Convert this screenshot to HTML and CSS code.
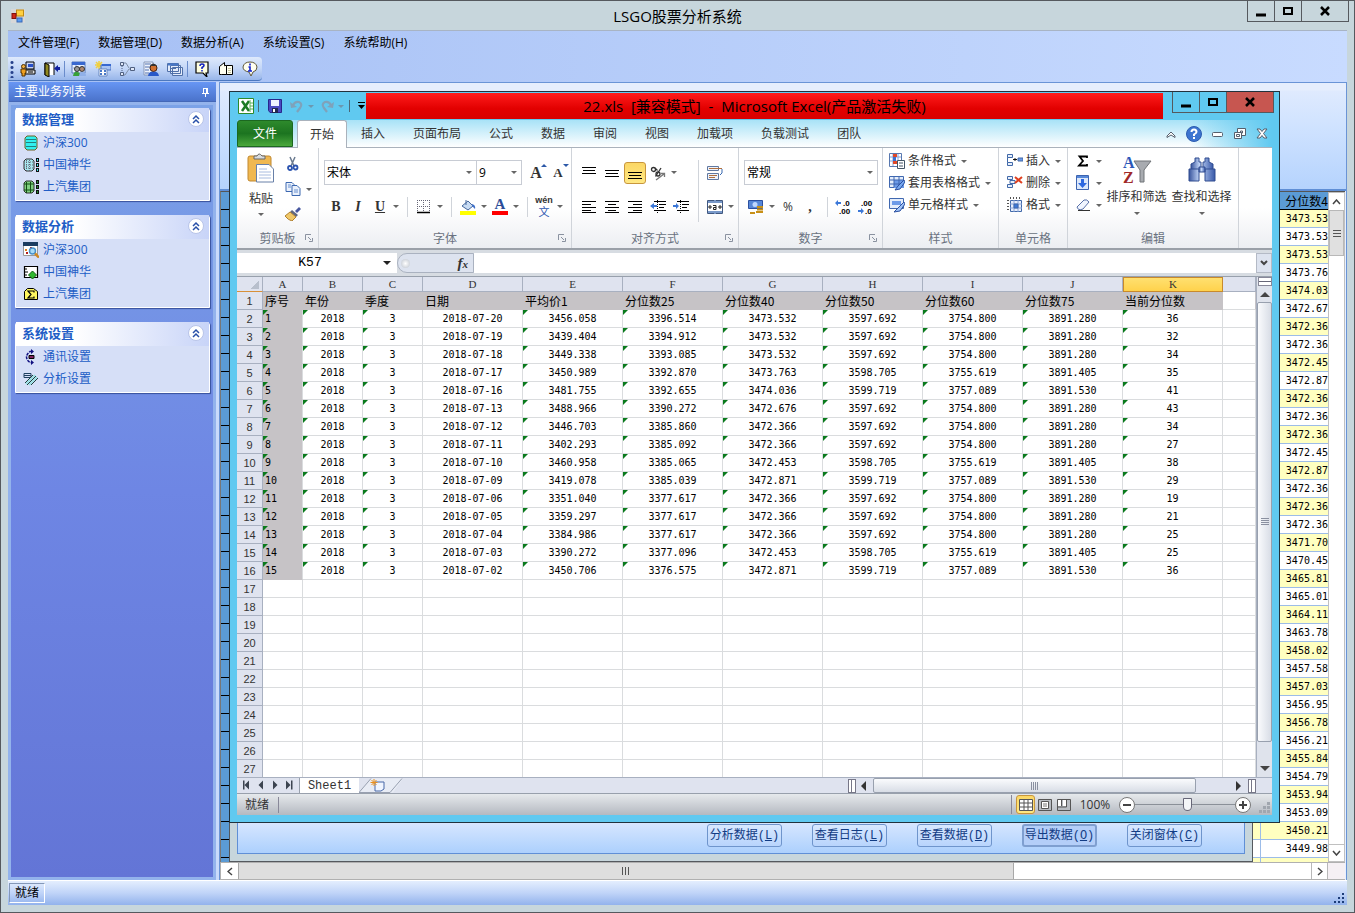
FILE: index.html
```
<!DOCTYPE html>
<html lang="zh-CN">
<head>
  <meta charset="UTF-8" />
  <meta name="viewport" content="width=device-width, initial-scale=1.0" />
  <title>LSGO股票分析系统</title>
  <link rel="stylesheet" href="styles.css">
</head>
<body>
<div class="app">
  <header class="titlebar">
    <svg class="app-icon" width="14" height="14" viewBox="0 0 14 14"><rect width="14" height="14" fill="#d8d8d8"/><rect x="5.500" y="1" width="7" height="6" fill="#ffd040" stroke="#c08a10"/><rect x="1" y="4.500" width="4" height="5" fill="#d02818" stroke="#801010"/><rect x="6" y="9" width="5" height="4" fill="#5c9cf0" stroke="#3468b8"/></svg>
    <h1>LSGO股票分析系统</h1>
    <div class="winbtns">
      <button aria-label="最小化"><svg width="12" height="12"><path d="M1 10h10" stroke="#000" stroke-width="3"/></svg></button>
      <button aria-label="最大化"><svg width="12" height="12"><path d="M2 3h8v6H2z" fill="none" stroke="#000" stroke-width="2"/></svg></button>
      <button class="close" aria-label="关闭"><svg width="12" height="12"><path d="M2 2l8 8M10 2l-8 8" stroke="#000" stroke-width="2.500"/></svg></button>
    </div>
  </header>

  <div class="frame">
    <nav class="menubar">
      <button>文件管理(F)</button><button>数据管理(D)</button><button>数据分析(A)</button><button>系统设置(S)</button><button>系统帮助(H)</button>
    </nav>
    <div class="toolrow">
      <div class="toolbar">
        <i class="grip"></i>
        <button aria-label="登录"><svg width="16" height="16"><path d="M6 1h8v7H6z" fill="#c8d4f0" stroke="#000"/><path d="M8 3h5v3H8z" fill="#2850c8"/><path d="M5 9h10v4H5z" fill="#e0e0e0" stroke="#000"/><path d="M8 11h5" stroke="#000"/><circle cx="3.500" cy="5.500" r="2" fill="#f0b040" stroke="#503000"/><path d="M1 8h5v4H5v3H2v-3H1z" fill="#f0a020" stroke="#503000"/></svg></button>
        <button aria-label="退出"><svg width="16" height="16"><path d="M1 14V2h9v12" fill="#fff" stroke="#000"/><path d="M1 2l4 2v12l-4-2z" fill="#908820" stroke="#000"/><path d="M16 6h-2V4l-4 3.500L14 11V9h2z" fill="#1020a0"/></svg></button>
        <i class="tsep"></i>
        <button aria-label="用户"><svg width="16" height="16"><path d="M1 1h13v11H1z" fill="#e8f0ff" stroke="#5878b8"/><path d="M1 1h13v3H1z" fill="#3868d0"/><path d="M2 7h11M5 4v8" stroke="#90a8d8"/><circle cx="6" cy="8" r="2.500" fill="#999" stroke="#333"/><circle cx="11" cy="8" r="2.500" fill="#b08870" stroke="#333"/><path d="M2 15q1-5 4-4 3 0 4 4z" fill="#38a038"/><path d="M8 15q1-5 4-4 3 0 3 4z" fill="#90b0e8"/></svg></button>
        <button aria-label="新建表"><svg width="16" height="16"><path d="M4 0v8M0 4h8M1 1l6 6M7 1L1 7" stroke="#f0d040" stroke-width="1.500"/><path d="M6 4h10v5H6z" fill="#a8c4f4" stroke="#4870c0"/><path d="M7 3h9v2H7z" fill="#3868d0"/><path d="M4 8h8v7H4z" fill="#fff" stroke="#6888c0"/><path d="M5 10h2M9 10h2M5 13h2M9 13h2" stroke="#4878c8" stroke-width="2"/></svg></button>
        <button aria-label="流程"><svg width="16" height="16" fill="#dfe8f8" stroke="#506080"><path d="M4 2h3l3 5M4 14h2l4-6h1" fill="none" stroke="#8090a8"/><path d="M1.500 1.500h3v3h-3zM1.500 11.500h3v3h-3zM11.500 6.500h4v3h-4z"/><path d="M3 5v6" stroke-dasharray="1 1"/></svg></button>
        <button aria-label="人员"><svg width="16" height="16"><path d="M1 1h9v13H1z" fill="#eef3fc" stroke="#8898b8"/><path d="M2 3h6M2 6h5M2 9h4M2 12h4" stroke="#5070b0"/><circle cx="10.500" cy="7" r="3.500" fill="#d07030" stroke="#402010"/><path d="M7 5q3-5 7 0z" fill="#333"/><path d="M5 15q1-5 5-4 5-1 6 4z" fill="#2858c8"/></svg></button>
        <button aria-label="窗口"><svg width="16" height="16" fill="#e4ecfa" stroke="#5070a8"><path d="M5.500 6.500h10v8h-10zM3.500 4.500h10v8h-10zM.500 2.500h11v8H.500z"/><path d="M1 3.500h10" stroke="#4878c8" stroke-width="2"/><path d="M3 7.500h6"/></svg></button>
        <i class="tsep"></i>
        <button aria-label="帮助"><svg width="16" height="16"><path d="M2 1h12v11h-2l1 4-4-4H2z" fill="#ffffe0" stroke="#000" stroke-width="1.200"/><path d="M6 5q0-2 2-2t2 1.500q0 1-2 2V8M8 9v1.500" fill="none" stroke="#1020c0" stroke-width="1.500"/></svg></button>
        <button aria-label="手册"><svg width="16" height="16"><path d="M1.500 5.500l5-4v9l-3 3h-2z" fill="#fffff0" stroke="#000"/><path d="M6.500 4.500h2v9h-5" fill="#fffff0" stroke="#000"/><path d="M8.500 4.500h6v9h-6z" fill="#fffff0" stroke="#000"/><path d="M10 7.500h3M10 9.500h3M10 11.500h3" stroke="#c8c8a0"/></svg></button>
        <button aria-label="关于"><svg width="16" height="16"><path d="M8 1q6 0 7 5 0 4-4 5l-2 4-2-4Q1 10 1 6q1-5 7-5z" fill="#fffff0" stroke="#605838"/><path d="M8 2.500v2M6.500 6H8v4M6 10h4" fill="none" stroke="#1020d0" stroke-width="1.600"/></svg></button>
      </div>
    </div>

    <div class="main">
      <aside class="dock">
        <div class="dock-head"><span>主要业务列表</span><svg width="9" height="10" fill="none" stroke="#fff"><path d="M2.500 1v5M6.500 1v5M5.500 1v5M2 1.500h4M1 6.500h7M4.500 7v3"/></svg></div>
        <div class="dock-body">
          <section class="card">
            <h2>数据管理<svg width="16" height="16"><circle cx="8" cy="8" r="7.500" fill="#fff" stroke="#b8c4e8"/><path d="M5 8l3-3 3 3M5 12l3-3 3 3" fill="none" stroke="#2850a8" stroke-width="1.500"/></svg></h2>
            <a href="#"><svg width="16" height="16"><path d="M2 3l2-2h8l2 2v10l-2 2H4l-2-2z" fill="#30f0f0" stroke="#706020"/><path d="M3 4.500h10M3 7.500h10M3 11.500h10" stroke="#208080"/></svg>沪深300</a>
            <a href="#"><svg width="16" height="16"><path d="M1 4l2-2h6l2 2v8l-2 2H3l-2-2z" fill="#a8e8f0" stroke="#333"/><path d="M3.500 3v11M6.500 3v11M1 5h10M1 8h10M1 11h10" stroke="#667" stroke-dasharray="1 1"/><path d="M13 1h3v4h-3zM13 6h3v4h-3zM13 11h3v4h-3z" fill="#111"/><path d="M14 3h1M14 8h1M14 13h1" stroke="#40e8f0" stroke-width="2"/></svg>中国神华</a>
            <a href="#"><svg width="16" height="16"><path d="M1 4l2-2h6l2 2v8l-2 2H3l-2-2z" fill="#80d080" stroke="#333"/><path d="M3.500 3v11M7.500 3v11M1 5h10M1 11h10" stroke="#145014"/><path d="M13 1h3v4h-3zM13 6h3v4h-3zM13 11h3v4h-3z" fill="#111"/><path d="M14 3h1M14 8h1M14 13h1" stroke="#208830" stroke-width="2"/></svg>上汽集团</a>
          </section>
          <section class="card">
            <h2>数据分析<svg width="16" height="16"><circle cx="8" cy="8" r="7.500" fill="#fff" stroke="#b8c4e8"/><path d="M5 8l3-3 3 3M5 12l3-3 3 3" fill="none" stroke="#2850a8" stroke-width="1.500"/></svg></h2>
            <a href="#"><svg width="16" height="16"><path d="M.500.500h14v13H.500z" fill="#fff" stroke="#999"/><path d="M0 0h15v4H0z" fill="#1c3c60"/><path d="M2 7h2v2H2z" fill="#e08020"/><path d="M3 10h2v2H3zM7 5h2v2H7z" fill="#b02020"/><circle cx="9.500" cy="9" r="3" fill="#a8dcf8" stroke="#4890c8" stroke-width="1.500"/><path d="M12 11.500l4 4" stroke="#d08820" stroke-width="2.500"/></svg>沪深300</a>
            <a href="#"><svg width="16" height="16"><path d="M1.500 2.500h13v11h-13z" fill="#fff" stroke="#000" stroke-width="1.200"/><path d="M2 5h2M2 8h3M2 11h2" stroke="#000"/><path d="M9.500 7l4 4-4 4-4-4z" fill="#30b830" stroke="#106010"/></svg>中国神华</a>
            <a href="#"><svg width="16" height="16"><path d="M1.500 5.500l3-3h6l4 3v8h-13z" fill="#fff860" stroke="#000"/><path d="M11 6.500V5H5l3 3.500L5 12h6v-1.500" fill="none" stroke="#000" stroke-width="1.200"/></svg>上汽集团</a>
          </section>
          <section class="card">
            <h2>系统设置<svg width="16" height="16"><circle cx="8" cy="8" r="7.500" fill="#fff" stroke="#b8c4e8"/><path d="M5 8l3-3 3 3M5 12l3-3 3 3" fill="none" stroke="#2850a8" stroke-width="1.500"/></svg></h2>
            <a href="#"><svg width="16" height="16"><path d="M9 2.500H7q-7 5.500 0 11h2" fill="none" stroke="#101080" stroke-width="1.500" stroke-dasharray="3 1"/><path d="M8 0l3 2.500L8 5zM8 11l3 2.500L8 16z" fill="#101080"/><path d="M6 6.500h5v3H6z" fill="#802060" stroke="#000"/></svg>通讯设置</a>
            <a href="#"><svg width="16" height="16" fill="none"><path d="M1 2.500h7v4H1zM1 4.500h7" stroke="#204060"/><path d="M3 13L12 4M6 14l8-8" stroke="#90e0e0" stroke-width="1.500"/><path d="M2 12L10 4M4 14L13 5M8 14l7-7" stroke="#204040"/></svg>分析设置</a>
          </section>
        </div>
      </aside>

      <main class="mdi">
        <div class="form-top"></div>
        <div class="gridwrap">
          <table class="backgrid">
            <colgroup><col class="c-sel"><col><col class="c-val"></colgroup>
            <thead><tr><th></th><th></th><th>分位数4</th></tr></thead>
            <tbody id="backRows"></tbody>
          </table>
          <div class="vbar">
            <button aria-label="向上"><svg width="9" height="6"><path d="M1 5l3.500-4L8 5" fill="none" stroke="#444" stroke-width="1.500"/></svg></button>
            <div class="vthumb"><svg width="8" height="9"><path d="M0 1.500h8M0 4.500h8M0 7.500h8" stroke="#555"/></svg></div>
            <button class="end" aria-label="向下"><svg width="9" height="6"><path d="M1 1l3.500 4L8 1" fill="none" stroke="#444" stroke-width="1.500"/></svg></button>
          </div>
        </div>
        <div class="hbar">
          <button aria-label="向左"><svg width="6" height="9"><path d="M5 1L1 4.500 5 8" fill="none" stroke="#444" stroke-width="1.500"/></svg></button>
          <div class="hthumb"><svg width="9" height="8"><path d="M1.500 0v8M4.500 0v8M7.500 0v8" stroke="#555"/></svg></div>
          <button class="end" aria-label="向右"><svg width="6" height="9"><path d="M1 1l4 3.500L1 8" fill="none" stroke="#444" stroke-width="1.500"/></svg></button>
          <i class="corner"></i>
        </div>

        <div class="dialog">
          <div class="dialog-in">
            <button>分析数据(<u>L</u>)</button>
            <button>查看日志(<u>L</u>)</button>
            <button>查看数据(<u>D</u>)</button>
            <button class="on">导出数据(<u>O</u>)</button>
            <button>关闭窗体(<u>C</u>)</button>
          </div>
        </div>

        <div class="excel">
          <div class="xl-title">
            <div class="qat">
              <svg width="16" height="16"><path d="M.500.500h15v15H.500z" fill="#fff" stroke="#2c8a2c"/><path d="M4 3l7 10M11 3L4 13" stroke="#1c7a24" stroke-width="2.500"/><path d="M12 2v12M12 5h3M12 8h3M12 11h3" stroke="#58b058"/></svg>
              <i class="qsep"></i>
              <button aria-label="保存"><svg width="14" height="14"><path d="M.500.500h13v13H2l-1.500-2z" fill="#4a4ac0" stroke="#28288c"/><path d="M3 1h8v6H3z" fill="#eef2ff"/><path d="M4 9h6v5H4z" fill="#222850"/><path d="M5 10h2v3H5z" fill="#fff"/></svg></button>
              <button class="gap" aria-label="撤销"><svg width="14" height="14"><path d="M3 6q2-4 6-3 4 2 1 6l-3 4" fill="none" stroke="#7fa2ba" stroke-width="2.200"/><path d="M0 3l1 6 6-1z" fill="#7fa2ba"/></svg></button><i class="arr dim"></i>
              <button aria-label="恢复"><svg width="14" height="14"><path d="M11 6Q9 2 5 3 1 5 4 9l3 4" fill="none" stroke="#7fa2ba" stroke-width="2.200"/><path d="M14 3l-1 6-6-1z" fill="#7fa2ba"/></svg></button><i class="arr dim"></i>
              <i class="qsep"></i>
              <svg width="7" height="8"><path d="M0 .500h7" stroke="#000"/><path d="M0 3h7L3.500 7z"/></svg>
            </div>
            <div class="xl-name">22.xls&nbsp; [兼容模式]&nbsp; -&nbsp; Microsoft Excel(产品激活失败)</div>
            <div class="winbtns">
              <button aria-label="最小化"><svg width="12" height="12"><path d="M1 10h10" stroke="#000" stroke-width="3"/></svg></button>
              <button aria-label="最大化"><svg width="12" height="12"><path d="M2 3h8v6H2z" fill="none" stroke="#000" stroke-width="2"/></svg></button>
              <button class="close red" aria-label="关闭"><svg width="12" height="12"><path d="M2 2l8 8M10 2l-8 8" stroke="#000" stroke-width="2.500"/></svg></button>
            </div>
          </div>

          <div class="tabs">
            <button class="file">文件</button>
            <button class="active">开始</button>
            <button>插入</button><button>页面布局</button><button>公式</button><button>数据</button><button>审阅</button><button>视图</button><button>加载项</button><button>负载测试</button><button>团队</button>
            <div class="tabs-right">
              <svg width="10" height="8"><path d="M1 6l4-4 4 4v1.500L5 5 1 7.500z" fill="#fff" stroke="#555f6c"/></svg>
              <svg width="16" height="16"><circle cx="8" cy="8" r="7.500" fill="#3c74d0" stroke="#2c5cb0"/><path d="M5.500 6q0-2.500 2.500-2.500T10.500 6q0 1-2.500 2.500V10M8 11v2" fill="none" stroke="#fff" stroke-width="2"/></svg>
              <svg width="12" height="6"><rect x=".500" y="1.500" width="10" height="4" rx="1" fill="#fff" stroke="#555f6c"/></svg>
              <svg width="12" height="12" fill="#fff" stroke="#555f6c"><path d="M3.500.500h8v7h-8z"/><path d="M6.500 3h2v2h-2z"/><path d="M.500 4.500h7v6h-7z"/><path d="M2.500 6.500h3v2h-3z"/></svg>
              <svg width="12" height="12"><path d="M1 1h3l2 2.500L8 1h3L7.500 5.500 11 10H8L6 7.500 4 10H1l3.500-4.500z" fill="#fff" stroke="#555f6c"/></svg>
            </div>
          </div>

          <div class="ribbon">
            <section class="group g-clip">
              <div class="gbody">
                <button class="big">
                  <svg width="28" height="30"><rect x="1" y="3" width="23" height="25" rx="2" fill="#f0b850" stroke="#c08830"/><path d="M7 6V3h3q2-4 5 0h3v3z" fill="#d8dce0" stroke="#666"/><path d="M9.500 11.500H22l4.500 4.500v13h-17z" fill="#fff" stroke="#6880a8"/><path d="M12 16h8M12 19h12M12 22h12M12 25h12" stroke="#a8bce0"/></svg>
                  <span>粘贴</span><i class="arr"></i>
                </button>
                <div class="stack">
                  <button class="tb" aria-label="剪切"><svg width="14" height="16"><path d="M4 1l4 9M9 1l-4 9" stroke="#6a7a90" stroke-width="1.500"/><circle cx="4" cy="12" r="2" fill="none" stroke="#2c54b0" stroke-width="1.800"/><circle cx="9.500" cy="11.500" r="2" fill="none" stroke="#2c54b0" stroke-width="1.800"/></svg></button>
                  <button class="tb drop" aria-label="复制"><svg width="16" height="14"><path d="M1 .500h6l2 2v7H1z" fill="#eaf1fc" stroke="#3c68b0"/><path d="M7 3.500h5l3 3v7H7z" fill="#eaf1fc" stroke="#3c68b0"/><path d="M3 3h3M3 5h3M9 8h4M9 10h4" stroke="#6890d0"/></svg><i class="arr"></i></button>
                  <button class="tb" aria-label="格式刷"><svg width="16" height="14"><path d="M10 4l4-4 2 2-4 4z" fill="#4858a0"/><path d="M7 3l6 5-2 2-6-5z" fill="#606880"/><path d="M5 5l6 5-4 4q-4-1-7-5z" fill="#f0c868" stroke="#b08030"/></svg></button>
                </div>
              </div>
              <h3>剪贴板<svg class="launch" width="8" height="8" fill="none" stroke="#8a92a0"><path d="M.500 6V.500H6M3 3l3 3M7.500 4v3.500H4"/></svg></h3>
            </section>

            <section class="group g-font">
              <div class="gbody rows">
                <div class="row">
                  <label class="pick p-name"><select aria-label="字体"><option>宋体</option></select><i class="arr"></i></label><label class="pick p-size"><select aria-label="字号"><option>9</option></select><i class="arr"></i></label>
                  <button class="tb serif gap">A<sup class="up"></sup></button><button class="tb serif small">A<sup class="down"></sup></button>
                </div>
                <div class="row">
                  <button class="tb serif b">B</button><button class="tb serif b it">I</button><button class="tb drop serif b"><u>U</u><i class="arr"></i></button>
                  <i class="sep"></i>
                  <button class="tb drop" aria-label="边框"><svg width="14" height="14" fill="none"><path d="M.500 0v12M6.500 0v12M12.500 0v12M0 .500h13M0 6.500h13" stroke="#667" stroke-dasharray="1 1"/><path d="M0 12.500h13" stroke="#000" stroke-width="1.500"/></svg><i class="arr"></i></button>
                  <i class="sep"></i>
                  <button class="tb drop" aria-label="填充颜色"><svg width="16" height="16"><path d="M2 7l6-5 5 5-5 4z" fill="#c8dcf4" stroke="#46689c"/><path d="M6 1v5" stroke="#46689c"/><path d="M12 5q4 1 3 5l-3-3z" fill="#4070c8"/><path d="M0 12h16v4H0z" fill="#ff0"/></svg><i class="arr"></i></button>
                  <button class="tb drop" aria-label="字体颜色"><span class="fontcolor">A</span><i class="arr"></i></button>
                  <i class="sep"></i>
                  <button class="tb drop wen" aria-label="拼音"><span><small>wén</small><b>文</b></span><i class="arr"></i></button>
                </div>
              </div>
              <h3>字体<svg class="launch" width="8" height="8" fill="none" stroke="#8a92a0"><path d="M.500 6V.500H6M3 3l3 3M7.500 4v3.500H4"/></svg></h3>
            </section>

            <section class="group g-align">
              <div class="gbody cols">
                <div class="rows">
                  <div class="row">
                    <button class="tb" aria-label="顶端对齐"><svg width="14" height="14" stroke="#000"><path d="M0 1.500h14M1 4.500h12M0 7.500h14"/></svg></button>
                    <button class="tb" aria-label="垂直居中"><svg width="14" height="14" stroke="#000"><path d="M0 4.500h14M1 7.500h12M0 10.500h14"/></svg></button>
                    <button class="tb hot" aria-label="底端对齐"><svg width="14" height="14" stroke="#000"><path d="M0 6.500h14M1 9.500h12M0 12.500h14"/></svg></button>
                    <button class="tb drop" aria-label="方向"><svg width="18" height="18" fill="none" stroke="#333" stroke-width="1.300"><circle cx="4.500" cy="5.500" r="2"/><path d="M6 4l2.500 2.500"/><circle cx="9" cy="10" r="2"/><path d="M6.500 12.500L12 4" /><path d="M7 16l8-6M12 9.500h3.500V13" stroke="#777"/></svg><i class="arr"></i></button>
                  </div>
                  <div class="row">
                    <button class="tb" aria-label="左对齐"><svg width="14" height="14" stroke="#000"><path d="M0 1.500h14M0 4.500h9M0 7.500h14M0 10.500h9M0 12.500h14"/></svg></button>
                    <button class="tb" aria-label="居中"><svg width="14" height="14" stroke="#000"><path d="M0 1.500h14M3 4.500h8M0 7.500h14M3 10.500h8M0 12.500h14"/></svg></button>
                    <button class="tb" aria-label="右对齐"><svg width="14" height="14" stroke="#000"><path d="M0 1.500h14M5 4.500h9M0 7.500h14M5 10.500h9M0 12.500h14"/></svg></button>
                    <button class="tb wide" aria-label="减少缩进"><svg width="16" height="14" stroke="#000"><path d="M4 1.500h12M9 4.500h7M9 7.500h5M4 10.500h12"/><path d="M7.500 0v14" stroke-dasharray="1 1"/><path d="M0 6l4-3v2h3v2H4v2z" fill="#3c78d8" stroke="none"/></svg></button>
                    <button class="tb" aria-label="增加缩进"><svg width="16" height="14" stroke="#000"><path d="M4 1.500h12M9 4.500h7M9 7.500h5M4 10.500h12"/><path d="M7.500 0v14" stroke-dasharray="1 1"/><path d="M6 6L3 3v2H0v2h3v2z" fill="#3c78d8" stroke="none"/></svg></button>
                  </div>
                </div>
                <i class="sep tall"></i>
                <div class="rows">
                  <div class="row"><button class="tb" aria-label="自动换行"><svg width="16" height="16" fill="none"><path d="M.500 1.500h11v4H.500zM.500 8.500h11v6H.500z" fill="#eef3fb" stroke="#6078a0"/><path d="M2 3.500h13M2 10.500h8M2 12.500h6" stroke="#b07040"/><path d="M15 4v4l-2 2" stroke="#3868b0"/></svg></button></div>
                  <div class="row"><button class="tb drop" aria-label="合并后居中"><svg width="16" height="14" fill="none"><path d="M.500.500h15v13H.500z" fill="#fff" stroke="#405880"/><path d="M1 2h14M1 12h14M8 0v3M8 11v3" stroke="#7898c8" stroke-width="2"/><path d="M1 7h4M11 7h4M3 5v4M13 5v4M6 5.500h3v4H6.500v-2H9" stroke="#222"/></svg><i class="arr"></i></button></div>
                </div>
              </div>
              <h3>对齐方式<svg class="launch" width="8" height="8" fill="none" stroke="#8a92a0"><path d="M.500 6V.500H6M3 3l3 3M7.500 4v3.500H4"/></svg></h3>
            </section>

            <section class="group g-num">
              <div class="gbody rows">
                <div class="row"><label class="pick p-fmt"><select aria-label="数字格式"><option>常规</option></select><i class="arr"></i></label></div>
                <div class="row">
                  <button class="tb drop" aria-label="货币"><svg width="16" height="16"><path d="M.500 1.500h14v8H.500z" fill="#5888d8" stroke="#2c50a0"/><circle cx="7" cy="5.500" r="2.500" fill="#c0d8ff"/><path d="M9 8h6M9 10.500h6M8 13h7M2 14h5" stroke="#c89018" stroke-width="2"/></svg><i class="arr"></i></button>
                  <button class="tb">%</button><button class="tb serif b">,</button>
                  <i class="sep"></i>
                  <button class="tb" aria-label="增加小数位数"><svg width="18" height="16" class="dec"><text x="8" y="7">.0</text><text x="4" y="15">.00</text><path d="M0 4l3-3v2h3v2H3v2z" fill="#3c78d8"/></svg></button><button class="tb" aria-label="减少小数位数"><svg width="18" height="16" class="dec"><text x="4" y="7">.00</text><text x="8" y="15">.0</text><path d="M7 12L4 9v2H1v2h3v2z" fill="#3c78d8"/></svg></button>
                </div>
              </div>
              <h3>数字<svg class="launch" width="8" height="8" fill="none" stroke="#8a92a0"><path d="M.500 6V.500H6M3 3l3 3M7.500 4v3.500H4"/></svg></h3>
            </section>

            <section class="group g-style">
              <div class="gbody stack">
                <button class="lb"><svg width="16" height="16"><path d="M.500.500h12v13H.500z" fill="#fff" stroke="#5878b0"/><path d="M1 4h11M1 8h11M4 1v12M9 1v12" stroke="#88a4d8"/><path d="M4 1h4v3H4zM4 8h5v3H4z" fill="#e04828"/><path d="M4 4h3v4H4z" fill="#3c70d0"/><path d="M8.500 7.500h7v8h-7z" fill="#fff" stroke="#456"/><path d="M10 10h4M10 13h4" stroke="#456"/></svg>条件格式<i class="arr"></i></button>
                <button class="lb"><svg width="16" height="16"><path d="M.500 1.500h14v11H.500z" fill="#e4edfb" stroke="#4068b0"/><path d="M5 5h10v8H5z" fill="#6c9ae8"/><path d="M1 5h14M1 9h14M5 2v10M10 2v10" stroke="#3c64b0"/><path d="M15 5l-6 6-3 4 5-1 5-7z" fill="#78a8f0" stroke="#2c50a0"/></svg>套用表格格式<i class="arr"></i></button>
                <button class="lb"><svg width="16" height="16"><path d="M.500 1.500h14v10H.500z" fill="#e4edfb" stroke="#4068b0"/><path d="M3 4h9v4H3z" fill="#6c9ae8"/><path d="M15 5l-6 6-4 4 6-1 5-7z" fill="#a0c4f8" stroke="#2c50a0"/></svg>单元格样式<i class="arr"></i></button>
              </div>
              <h3>样式</h3>
            </section>

            <section class="group g-cell">
              <div class="gbody stack">
                <button class="lb"><svg width="16" height="14" fill="#e8effb" stroke="#4068a8"><path d="M.500.500h5v3h-5zM.500 8.500h5v3h-5z"/><path d="M.500 3.500v5M11 4h5v3h-5z" fill="#6c9ae8"/><path d="M6 5.500h4M8 4v3" stroke="#111"/></svg>插入<i class="arr"></i></button>
                <button class="lb"><svg width="16" height="14" fill="#e8effb" stroke="#4068a8"><path d="M.500.500h5v3h-5zM.500 8.500h5v3h-5zM3 4.500h5v3H3z"/><path d="M8 1l7 6M15 1L8 7" stroke="#e04020" stroke-width="2"/></svg>删除<i class="arr"></i></button>
                <button class="lb"><svg width="16" height="16" fill="#e8effb" stroke="#4068a8"><path d="M3.500 3.500h11v11h-11z"/><path d="M3 7h12M3 11h12M7 3v12M11 3v12" stroke="#88a4d8"/><path d="M7 7h4v4H7z" fill="#3c78d8"/><path d="M3 1h12M1 3v12" stroke="#555" stroke-dasharray="1 2" stroke-width="2"/></svg>格式<i class="arr"></i></button>
              </div>
              <h3>单元格</h3>
            </section>

            <section class="group g-edit">
              <div class="gbody cols">
                <div class="stack">
                  <button class="tb drop" aria-label="求和"><svg width="12" height="12"><path d="M10 3V1.500H2.500L6 6l-4 4.500h8V9" fill="none" stroke="#000" stroke-width="1.800"/></svg><i class="arr"></i></button>
                  <button class="tb drop" aria-label="填充"><svg width="14" height="16"><path d="M.500.500h12v14H.500z" fill="#dce8fb" stroke="#3c64b0"/><path d="M1 1h11v2H1z" fill="#5888d8"/><path d="M5 4h3v4h3l-4.500 5L2 8h3z" fill="#2c68e0"/></svg><i class="arr"></i></button>
                  <button class="tb drop" aria-label="清除"><svg width="15" height="14"><path d="M1 9l7-7q3-1 5 2L7 11q-5 2-6-2z" fill="#f0f5ff" stroke="#5870a8"/><path d="M2 12.500h12" stroke="#333"/></svg><i class="arr"></i></button>
                </div>
                <button class="big">
                  <svg width="30" height="30"><path d="M12 6h17l-7 9v12h-4V15z" fill="#a8abb0" stroke="#707478"/><text x="1" y="13" class="az" fill="#2c58b8">A</text><text x="1" y="28" class="az" fill="#a02828">Z</text></svg>
                  <span>排序和筛选</span><i class="arr"></i>
                </button>
                <button class="big">
                  <svg width="28" height="30"><defs><linearGradient id="bin"><stop offset="0" stop-color="#38549c"/><stop offset=".4" stop-color="#c4d8fa"/><stop offset="1" stop-color="#3858a8"/></linearGradient></defs><g fill="url(#bin)" stroke="#304c90"><path d="M7 3h4v4h2v9H3V9l4-2zM17 3h4v4l4 2v7H15V7h2z"/><path d="M1 14h10v12H1zM17 14h10v12H17z"/><path d="M11 12h6v5h-6z"/></g></svg>
                  <span>查找和选择</span><i class="arr"></i>
                </button>
              </div>
              <h3>编辑</h3>
            </section>
          </div>

          <div class="formula">
            <div class="namebox"><input aria-label="名称框" value="K57"><i class="arr dark"></i></div>
            <div class="fx"><i class="knob"></i><em>f<small>x</small></em></div>
            <input class="fxinput" aria-label="编辑栏">
            <button class="expand" aria-label="展开"><svg width="8" height="6"><path d="M1 1l3 3 3-3" fill="none" stroke="#444" stroke-width="2"/></svg></button>
          </div>

          <div class="sheetwrap">
            <div class="sheetclip">
              <table class="sheet">
                <colgroup><col class="w26"><col class="w40"><col class="w60"><col class="w60"><col class="w100"><col class="w100"><col class="w100"><col class="w100"><col class="w100"><col class="w100"><col class="w100"><col class="w100"><col></colgroup>
                <thead><tr id="sheetCols"></tr></thead>
                <tbody id="sheetRows"></tbody>
              </table>
            </div>
            <div class="xv">
              <i class="split"></i>
              <i class="tri up"></i>
              <div class="xthumb"><svg width="8" height="8"><path d="M0 .500h8M0 2.500h8M0 4.500h8M0 6.500h8" stroke="#8a90a0"/></svg></div>
              <i class="tri down"></i>
            </div>
          </div>

          <div class="sheettabs">
            <div class="nav">
              <svg width="62" height="14" fill="#3c4450"><path d="M6 2.500h1.500v9H6zM12 2.500v9L7.500 7zM26 2.500v9L21.500 7zM36 2.500v9L40.500 7zM49 2.500v9L53.500 7zM54 2.500h1.500v9H54z"/></svg>
            </div>
            <button class="tab1">Sheet1</button>
            <svg width="48" height="15"><path d="M0 14.500L12 .500h32L34 14.500z" fill="#e8ecf5"/><path d="M0 14.500L12 .500M31 14.500L43 .500M0 14.500h31" fill="none" stroke="#98a0b0"/><path d="M16 4h9v7l-3 2h-6z" fill="#f0f5ff" stroke="#4868a8"/><path d="M15 1v7M11.500 4.500h7M12.500 2l5 5M17.500 2l-5 5" stroke="#e89020"/></svg>
            <div class="hs">
              <i class="hsplit"></i><i class="tri left"></i>
              <div class="hs-thumb"><svg width="8" height="8"><path d="M.500 0v8M2.500 0v8M4.500 0v8M6.500 0v8" stroke="#8a90a0"/></svg></div>
              <i class="tri right"></i><i class="hsplit"></i>
            </div>
          </div>

          <div class="xl-status">
            <span class="ready">就绪</span>
            <div class="views">
              <button class="hot" aria-label="普通"><svg width="14" height="12"><path d="M.500.500h13v11H.500z" fill="#fff" stroke="#555"/><path d="M1 4h12M1 8h12M5 1v10M9 1v10" stroke="#555"/></svg></button>
              <button aria-label="页面布局"><svg width="14" height="12"><path d="M.500.500h13v11H.500z" fill="#b8bcc2" stroke="#555"/><path d="M3.500 2.500h7v7h-7z" fill="#fff" stroke="#555"/><path d="M5 5h4M5 7h4" stroke="#777"/></svg></button>
              <button aria-label="分页预览"><svg width="14" height="12"><path d="M.500.500h13v11H.500z" fill="#b8bcc2" stroke="#555"/><path d="M1 1h3v6H1zM6 1h3v6H6z" fill="#fff"/><path d="M4.500 1v6M9.500 1v7H1" fill="none" stroke="#555"/></svg></button>
            </div>
            <span class="pct">100%</span>
            <button class="zb" aria-label="缩小"><svg width="16" height="16"><circle cx="8" cy="8" r="7.500" fill="#fff" stroke="#777"/><path d="M4 8h8" stroke="#444" stroke-width="2"/></svg></button>
            <input type="range" min="10" max="190" value="104" aria-label="显示比例">
            <button class="zb" aria-label="放大"><svg width="16" height="16"><circle cx="8" cy="8" r="7.500" fill="#fff" stroke="#777"/><path d="M4 8h8M8 4v8" stroke="#444" stroke-width="2"/></svg></button>
            <svg class="size" width="12" height="12" fill="#a0a6ae"><path d="M8 0h3v3H8zM4 4h3v3H4zM8 4h3v3H8zM0 8h3v3H0zM4 8h3v3H4zM8 8h3v3H8z"/></svg>
          </div>
        </div>
      </main>
    </div>

    <footer class="status"><span>就绪</span><svg width="12" height="12"><path d="M9 1h2v2H9zM5 5h2v2H5zM9 5h2v2H9zM1 9h2v2H1zM5 9h2v2H5zM9 9h2v2H9z" fill="#1c3c78"/></svg></footer>
  </div>
</div>

<script>
  const heads = ['序号', '年份', '季度', '日期', '平均价1', '分位数25', '分位数40', '分位数50', '分位数60', '分位数75', '当前分位数'];
  // 日期, 平均价, 25, 40, 50, 60, 75, 当前
  const data = [
    ['07-20', '3456.058', '3396.514', '3473.532', '3597.692', '3754.800', '3891.280', 36],
    ['07-19', '3439.404', '3394.912', '3473.532', '3597.692', '3754.800', '3891.280', 32],
    ['07-18', '3449.338', '3393.085', '3473.532', '3597.692', '3754.800', '3891.280', 34],
    ['07-17', '3450.989', '3392.870', '3473.763', '3598.705', '3755.619', '3891.405', 35],
    ['07-16', '3481.755', '3392.655', '3474.036', '3599.719', '3757.089', '3891.530', 41],
    ['07-13', '3488.966', '3390.272', '3472.676', '3597.692', '3754.800', '3891.280', 43],
    ['07-12', '3446.703', '3385.860', '3472.366', '3597.692', '3754.800', '3891.280', 34],
    ['07-11', '3402.293', '3385.092', '3472.366', '3597.692', '3754.800', '3891.280', 27],
    ['07-10', '3460.958', '3385.065', '3472.453', '3598.705', '3755.619', '3891.405', 38],
    ['07-09', '3419.078', '3385.039', '3472.871', '3599.719', '3757.089', '3891.530', 29],
    ['07-06', '3351.040', '3377.617', '3472.366', '3597.692', '3754.800', '3891.280', 19],
    ['07-05', '3359.297', '3377.617', '3472.366', '3597.692', '3754.800', '3891.280', 21],
    ['07-04', '3384.986', '3377.617', '3472.366', '3597.692', '3754.800', '3891.280', 25],
    ['07-03', '3390.272', '3377.096', '3472.453', '3598.705', '3755.619', '3891.405', 25],
    ['07-02', '3450.706', '3376.575', '3472.871', '3599.719', '3757.089', '3891.530', 36]
  ];

  document.getElementById('sheetCols').innerHTML =
    '<th class="all"></th>' + 'ABCDEFGHIJK'.split('').map(c => `<th${c === 'K' ? ' class="sel"' : ''}>${c}</th>`).join('') + '<th></th>';

  let html = '<tr class="names"><th>1</th>' + heads.map(h => `<td>${h}</td>`).join('') + '<td class="rest"></td></tr>';
  for (let r = 2; r <= 27; r++) {
    const d = data[r - 2];
    const cells = d ? [r - 1, 2018, 3, '2018-' + d[0], ...d.slice(1)] : Array(11).fill('');
    html += `<tr><th>${r}</th>` + cells.map((v, i) => {
      const cls = d ? (i === 0 ? 'no flag' : i === 3 ? '' : 'flag') : '';
      return `<td class="${cls}">${v}</td>`;
    }).join('') + '<td></td></tr>';
  }
  document.getElementById('sheetRows').innerHTML = html;

  const back = ['3473.53', '3473.53', '3473.53', '3473.76', '3474.03', '3472.67', '3472.36', '3472.36', '3472.45',
    '3472.87', '3472.36', '3472.36', '3472.36', '3472.45', '3472.87', '3472.36', '3472.36', '3472.36', '3471.70',
    '3470.45', '3465.81', '3465.01', '3464.11', '3463.78', '3458.02', '3457.58', '3457.03', '3456.95', '3456.78',
    '3456.21', '3455.84', '3454.79', '3453.94', '3453.09', '3450.21', '3449.98', ''];
  document.getElementById('backRows').innerHTML = back.map(v => `<tr><th></th><td></td><td>${v}</td></tr>`).join('');
</script>
</body>
</html>
```
FILE: styles.css
```
* { box-sizing: border-box; }
html, body { height: 100%; }
body { margin: 0; font: 12px/16px "Open Sans", "Noto Sans CJK SC", sans-serif; color: #000; overflow: hidden; }
button { font: inherit; color: inherit; background: none; border: 0; padding: 0; margin: 0; display: flex; align-items: center; justify-content: center; white-space: nowrap; }
h1, h2, h3 { margin: 0; font-weight: normal; }
svg { display: block; flex: none; }
i { flex: none; }

/* outer window */
.app { height: 100vh; display: flex; flex-direction: column; background: #c7d6dc; border: 1px solid #55595e; padding: 0 7px 7px; }
.titlebar { height: 29px; display: grid; grid-template-columns: 1fr auto 1fr; align-items: center; flex: none; }
.titlebar h1 { font-size: 15px; line-height: 20px; }
.app-icon { margin-left: 3px; }
.winbtns { display: flex; align-self: start; justify-self: end; border: 1px solid #55595e; border-top: 0; height: 21px; margin-right: -2px; }
.winbtns button { width: 27px; border-right: 1px solid #55595e; }
.winbtns .close { width: 46px; border-right: 0; }
.winbtns .red { background: #c75650; }
.frame { flex: 1; min-height: 0; display: flex; flex-direction: column; }
.menubar { height: 27px; display: flex; gap: 19px; padding: 0 10px 2px; border-top: 1px solid #a8b4c4; background: linear-gradient(90deg, #a5bff4, #c8dbff); }
.toolrow { height: 25px; background: linear-gradient(90deg, #a5bff4, #c8dbff); display: flex; }
.toolbar { display: flex; align-items: center; height: 24px; background: linear-gradient(#dfeafc, #c3d6f7 50%, #98b6ea); border-bottom: 1px solid #4c78c0; border-radius: 0 4px 4px 0; }
.toolbar button { width: 24px; height: 22px; }
.grip { width: 8px; height: 18px; background: radial-gradient(circle, #27418c 1px, transparent 2px) 0 0 / 8px 5px; }
.tsep { width: 3px; height: 16px; border-left: 1px solid #6a8ccb; }
.main { flex: 1; min-height: 0; display: flex; background: #c9dafb; }

/* task pane */
.dock { width: 208px; margin-right: 3px; display: flex; flex-direction: column; background: #93b3ec; }
.dock-head { height: 20px; margin-left: 1px; padding: 0 6px 0 5px; background: linear-gradient(#6796f4, #4b73cb); color: #fff; display: flex; align-items: center; justify-content: space-between; border-bottom: 1px solid #4468b8; }
.dock-body { flex: 1; margin: 3px 3px 3px; padding: 3px 3px 3px 4px; background: linear-gradient(#7ba2e7, #6e86e4 50%, #6375d6); display: flex; flex-direction: column; gap: 14px; }
.card { border: 1px solid #fff; border-radius: 3px 3px 0 0; background: #d6dff7; padding-bottom: 2px; box-shadow: 1px 1px 1px #38509c; }
.card h2 { height: 24px; margin-top: -1px; padding: 0 5px 2px 6px; font-size: 13px; font-weight: bold; color: #215dc6; display: flex; align-items: center; justify-content: space-between; background: linear-gradient(90deg, #fff 30%, #c8d4f8); }
.card a { height: 22px; padding-left: 7px; display: flex; align-items: center; gap: 4px; color: #215dc6; text-decoration: none; }

/* mdi client */
.mdi { flex: 1; min-width: 0; position: relative; display: flex; flex-direction: column; border: 1px solid #6a94d6; border-width: 1px 1px 0; background: #e8f0fe; padding-right: 1px; }
.form-top { height: 108px; flex: none; margin-right: -1px; background: linear-gradient(#e6eefd 7px, #dfeafe 8px, #d0e3ff 40%, #b5d3fd); border-bottom: 2px solid #5f8fd6; }
.gridwrap { flex: 1; min-height: 0; overflow: hidden; display: flex; border-left: 1px solid #777; border-top: 1px solid #555; }
.backgrid { flex: 1; height: max-content; table-layout: fixed; border-collapse: separate; border-spacing: 0; font: 10px/17px "DejaVu Sans Mono", "Noto Sans CJK SC", monospace; }
.backgrid th, .backgrid td { height: 18px; padding: 0; border-bottom: 1px solid #9cbce8; border-right: 1px solid #9cbce8; text-align: right; white-space: nowrap; overflow: hidden; font-weight: normal; }
.backgrid th { background: #5b9bd5; border-color: #000; }
.backgrid thead th { font: 12px/16px "Noto Sans CJK SC", sans-serif; }
.backgrid td:last-child, .backgrid th:last-child { border-right: 0; }
.backgrid tbody tr:nth-child(odd) td { background: #ffffc0; }
.backgrid tbody tr:nth-child(even) td { background: #fff; }
.c-sel { width: 30px; }
.c-val { width: 67px; }
.vbar { width: 17px; background: #fff; border: 1px solid #c0c0c0; display: flex; flex-direction: column; }
.vbar button { height: 17px; }
.vbar .end { margin-top: auto; border-top: 1px solid #c0c0c0; }
.vthumb { height: 46px; background: #e0e0e0; border: 1px solid #b8b8b8; display: flex; align-items: center; justify-content: center; }
.hbar { height: 18px; flex: none; display: flex; background: #fff; border: 1px solid #b0b0b0; border-right: 0; }
.hbar button { width: 17px; }
.hthumb { width: 69%; background: #dedede; border: 1px solid #a8a8a8; border-width: 0 1px; display: flex; align-items: center; justify-content: center; }
.hbar .end { margin-left: auto; border: 1px solid #b8b8b8; border-width: 0 1px; }
.corner { width: 17px; background: #f5f0f4; }

.dialog { position: absolute; left: 9px; right: 93px; top: 9px; bottom: 18px; padding: 7px; border: 1px solid #55595e; background: #c7d6dc; display: flex; }
.dialog-in { flex: 1; display: flex; align-items: flex-end; justify-content: flex-end; gap: 30px; padding: 0 42px 6px 0; border: 1px solid #5f8fd6; background: linear-gradient(#dce9ff calc(100% - 34px), #acd0fd); }
.dialog-in button { width: 75px; height: 23px; border: 1px solid #6f95cc; border-radius: 3px; color: #123c84; font: 12px/16px "Liberation Mono", "Noto Sans CJK SC", monospace; background: linear-gradient(#d8e8ff, #b8d4fc); }
.dialog-in .on { border: 2px solid #7f9fd0; background: #b4cef8; }

/* excel window */
.excel { position: absolute; left: 9px; right: 66px; top: 8px; bottom: 57px; border: 1px solid #22323c; background: #60c9f0; padding: 0 7px 7px; display: flex; flex-direction: column; }
.xl-title { height: 28px; flex: none; display: flex; align-items: center; }
.qat { width: 129px; display: flex; align-items: center; gap: 4px; padding-left: 1px; }
.qsep { width: 5px; height: 12px; border-left: 1px solid #4a6878; }
.qat button { width: 15px; }
.qat .gap { margin-left: 3px; }
.arr { display: block; border: 3px solid transparent; border-top-color: #666; border-bottom: 0; width: 6px; height: 3px; }
.arr.dim { border-top-color: #6c98b0; margin-right: 1px; }
.arr.dark { border-width: 4px 4px 0; width: 8px; height: 4px; border-top-color: #222; }
.xl-name { flex: 1; height: 26px; margin-right: 9px; padding-right: 20px; background: linear-gradient(#ff1c1c, #e20000 60%, #d80000); text-align: center; font-size: 15px; line-height: 26px; white-space: nowrap; overflow: hidden; }
.tabs { height: 28px; flex: none; display: flex; align-items: flex-end; background: linear-gradient(90deg, rgba(96,201,240,.5), transparent 8%, transparent 92%, #60c9f0), linear-gradient(#a8e2f7, #fff); color: #333; border-bottom: 1px solid #aab2bc; }
.tabs button { height: 27px; padding: 0 14px; }
.tabs .file { width: 56px; margin-right: 4px; color: #fff; background: linear-gradient(#2e8a2c, #1c7420 50%, #4aa83c); border: 1px solid #1c6820; border-radius: 3px 3px 0 0; }
.tabs .active { width: 50px; padding: 0; height: 28px; margin-bottom: -1px; background: #fff; border: 1px solid #aab2bc; border-bottom: 0; border-radius: 3px 3px 0 0; }
.tabs-right { margin-left: auto; align-self: center; display: flex; align-items: center; gap: 10px; padding-right: 4px; }
.ribbon { height: 102px; flex: none; display: flex; background: linear-gradient(#fff 60%, #eceef2); border-bottom: 2px solid #9aa0a8; color: #333; overflow: hidden; }
.group { display: flex; flex-direction: column; border-right: 1px solid #d0d4da; flex: none; }
.group h3 { font-size: 12px; line-height: 18px; color: #6a7280; text-align: center; position: relative; }
.launch { position: absolute; right: 5px; top: 4px; }
.g-clip { width: 82px; }
.g-font { width: 253px; }
.g-align { width: 167px; }
.g-num { width: 144px; }
.g-style { width: 116px; }
.g-cell { width: 69px; }
.g-edit { width: 171px; }
.gbody { height: 82px; flex: none; padding-left: 6px; }
.gbody.rows, .gbody.cols { padding-top: 12px; }
.g-clip .gbody, .g-edit .gbody.cols { display: flex; padding-top: 2px; }
.g-clip .gbody { padding-top: 5px; }
.rows { display: flex; flex-direction: column; gap: 9px; }
.cols { display: flex; }
.row { display: flex; align-items: center; height: 25px; }
.g-align .row { gap: 1px; }
.stack { display: flex; flex-direction: column; align-items: flex-start; }
.gbody.stack { padding-top: 2px; }
.tb { width: 22px; height: 22px; flex: none; }
.tb.drop { width: 32px; display: grid; grid-template-columns: 22px 10px; justify-items: center; }
.serif { font: 16px/20px "Liberation Serif", serif; font-weight: bold; position: relative; }
.serif.small { font-size: 13px; }
.serif.gap { margin-left: 3px; }
.serif.b { font-size: 14px; }
.it { font-style: italic; }
.serif sup { position: absolute; right: 0; top: 2px; border: 3px solid transparent; }
.serif sup.up { border-bottom-color: #2c58a8; border-top: 0; }
.serif sup.down { border-top-color: #2c58a8; border-bottom: 0; }
.sep { width: 12px; height: 20px; background: linear-gradient(90deg, transparent 6px, #d0d4da 6px, #d0d4da 7px, transparent 7px); }
.sep.tall { height: 62px; }
.hot { background: linear-gradient(#fbd765, #ffe884); border: 1px solid #c8963c; border-radius: 3px; }
.pick { position: relative; height: 25px; }
.pick select { appearance: none; width: 100%; height: 25px; border: 1px solid #c8ccd4; border-radius: 0; background: #fff; font: inherit; padding: 0 2px; color: #000; }
.pick .arr { position: absolute; right: 5px; top: 11px; }
.p-name { width: 153px; margin-left: -1px; }
.p-size { width: 46px; margin-left: -1px; }
.p-fmt { width: 134px; margin-left: -1px; }
.fontcolor { font: bold 15px/13px "Liberation Serif", serif; color: #2c4c98; border-bottom: 4px solid #f00; padding: 0 3px; }
.wen span { display: flex; flex-direction: column; align-items: center; color: #2c58b0; }
.wen small { font: bold 9px/9px "Liberation Sans", sans-serif; color: #333; }
.wen b { font: 11px/12px "Noto Sans CJK SC", sans-serif; }
.az { font: bold 16px "Liberation Serif", serif; }
.dec { font: bold 8px "Liberation Sans", sans-serif; }
.big { flex-direction: column; justify-content: flex-start; width: 65px; }
.big span { margin: 8px 0 6px; }
.g-clip .big { width: 36px; }
.g-clip .stack { padding-left: 3px; gap: 3px; }
.g-edit .big { padding-top: 5px; }
.g-edit .big span { margin: 2px 0 5px; line-height: 20px; }
.g-edit .gbody { padding-left: 4px; }
.lb { height: 22px; gap: 3px; }
.lb .arr { margin-left: 2px; }
.g-cell .gbody { padding-left: 8px; }

.formula { height: 27px; flex: none; display: flex; padding: 3px 0 3px; background: #d7dce2; border-bottom: 1px solid #98a0ac; }
.namebox { width: 160px; background: #fff; display: flex; align-items: center; padding-right: 6px; }
.namebox input { flex: 1; min-width: 0; border: 0; padding: 0; background: none; text-align: center; font: 13px/18px "Liberation Mono", monospace; }
.fx { width: 77px; display: flex; align-items: center; justify-content: space-between; padding: 0 5px 0 3px; border: 1px solid #aab2c0; border-radius: 10px 0 0 10px; background: #dde3ef; }
.fx em { font: italic bold 15px/18px "Liberation Serif", serif; color: #333; }
.fx small { font-size: 11px; }
.knob { width: 9px; height: 9px; border-radius: 50%; background: radial-gradient(#fff, #bcc2cc); }
.fxinput { flex: 1; min-width: 0; border: 0; background: #fff; padding: 0 4px; }
.expand { width: 16px; border: 1px solid #b4bac6; background: #dde3ef; }

.sheetwrap { flex: 1; min-height: 0; display: flex; }
.sheetclip { flex: 1; min-width: 0; overflow: hidden; background: #fff; }
.sheet { width: 100%; table-layout: fixed; border-collapse: separate; border-spacing: 0; font: 10px/16px "DejaVu Sans Mono", "Noto Sans CJK SC", monospace; }
.sheet td, .sheet tbody th { height: 18px; padding: 0; border-right: 1px solid #dadcde; border-bottom: 1px solid #dadcde; text-align: center; white-space: nowrap; }
.sheet tbody th { background: #dfe3ef; border-color: #a8b0c0; font: 11px/16px "Liberation Sans", sans-serif; color: #333; }
.sheet thead th { height: 15px; padding: 0; background: #dfe3ef; border-right: 1px solid #a8b0c0; border-bottom: 1px solid #a8b0c0; font: 11px/13px "Liberation Serif", serif; color: #333; }
.sheet thead .sel { background: linear-gradient(#ffe070, #ffd24c); border: 1px solid #c88a2c; }
.sheet thead .all { background: linear-gradient(135deg, transparent 50%, #b8bfcc 50%) 14px 4px / 8px 8px no-repeat, #dfe3ef; border-bottom-color: #d89038; }
.sheet .names td { background: #c6c3c6; border-color: #c6c3c6; text-align: left; padding-left: 2px; font: 12px/16px "Noto Sans CJK SC", sans-serif; }
.sheet .names .rest { background: #fff; border-bottom-color: #dadcde; }
.sheet .no { background: #c6c3c6; border-bottom-color: #c6c3c6; text-align: left; padding-left: 2px; }
.sheet .flag { position: relative; }
.sheet .flag::before { content: ""; position: absolute; left: 0; top: 0; border-top: 5px solid #0a7a1c; border-right: 5px solid transparent; }
.w26 { width: 26px; }
.w40 { width: 40px; }
.w60 { width: 60px; }
.w100 { width: 100px; }
.xv { width: 16px; background: #dfe3ec; border-left: 1px solid #a8b0c0; display: flex; flex-direction: column; align-items: center; }
.split { width: 14px; height: 9px; background: linear-gradient(#fff 3px, #667 3px, #667 4px, #fff 4px); border: 1px solid #889; }
.tri { display: block; border: 5px solid transparent; width: 10px; }
.tri.up { border-bottom-color: #444; border-top: 0; margin: 6px 0 5px; }
.tri.down { border-top-color: #444; border-bottom: 0; margin: 24px 0 6px; }
.tri.left { border-right-color: #333; border-left: 0; width: 5px; height: 10px; margin: 0 7px 0 5px; }
.tri.right { border-left-color: #333; border-right: 0; width: 5px; height: 10px; margin: 0 7px 0 40px; }
.xthumb { flex: 1; width: 15px; border: 1px solid #98a0ae; border-radius: 2px; background: linear-gradient(90deg, #fafbfd, #d8dde6); display: flex; align-items: center; justify-content: center; }
.sheettabs { height: 17px; flex: none; display: flex; background: #dfe3ef; border-top: 1px solid #a8b0c0; border-bottom: 1px solid #98a0ac; }
.nav { width: 63px; border-right: 1px solid #98a0ac; }
.tab1 { width: 59px; background: #fff; color: #333; font: 12px/14px "Liberation Mono", monospace; }
.hs { width: 424px; margin-left: auto; padding-right: 16px; display: flex; align-items: center; }
.hsplit { width: 8px; height: 14px; border: 1px solid #778; background: linear-gradient(90deg, #fff 2px, #778 2px, #778 3px, #fff 3px); }
.hs-thumb { flex: 1; height: 15px; border: 1px solid #98a0ae; border-radius: 2px; background: linear-gradient(#fafbfd, #d8dde6); display: flex; align-items: center; justify-content: center; }
.xl-status { height: 21px; flex: none; display: flex; align-items: center; padding-right: 1px; background: linear-gradient(#e6e9ec, #c8ccd2 60%, #b4b9c0); color: #333; }
.ready { width: 42px; padding-left: 8px; border-right: 1px solid #889; }
.views { margin-left: auto; display: flex; align-items: center; gap: 5px; padding-left: 4px; border-left: 1px solid #889; }
.views .hot { width: 19px; height: 19px; margin-right: -2px; }
.pct { width: 48px; text-align: center; }
.xl-status input { appearance: none; width: 100px; height: 16px; margin: 0; background: linear-gradient(transparent 7px, #8a9098 7px, #8a9098 8px, transparent 8px); }
.xl-status input::-webkit-slider-thumb { appearance: none; width: 9px; height: 13px; background: #f4f6f8; border: 1px solid #667; border-radius: 1px 1px 5px 5px; }
.size { margin: 6px 0 0 8px; }

.status { height: 25px; flex: none; display: flex; align-items: center; justify-content: space-between; padding: 0 2px 0 1px; background: linear-gradient(#e4eefe, #c0d4f8 50%, #92b2ec); border-top: 1px solid #fff; }
.status span { padding: 1px 5px; border: 1px solid #fff; border-top-color: #8498b8; border-left-color: #8498b8; }
.status svg { align-self: flex-end; margin-bottom: 1px; }
```
